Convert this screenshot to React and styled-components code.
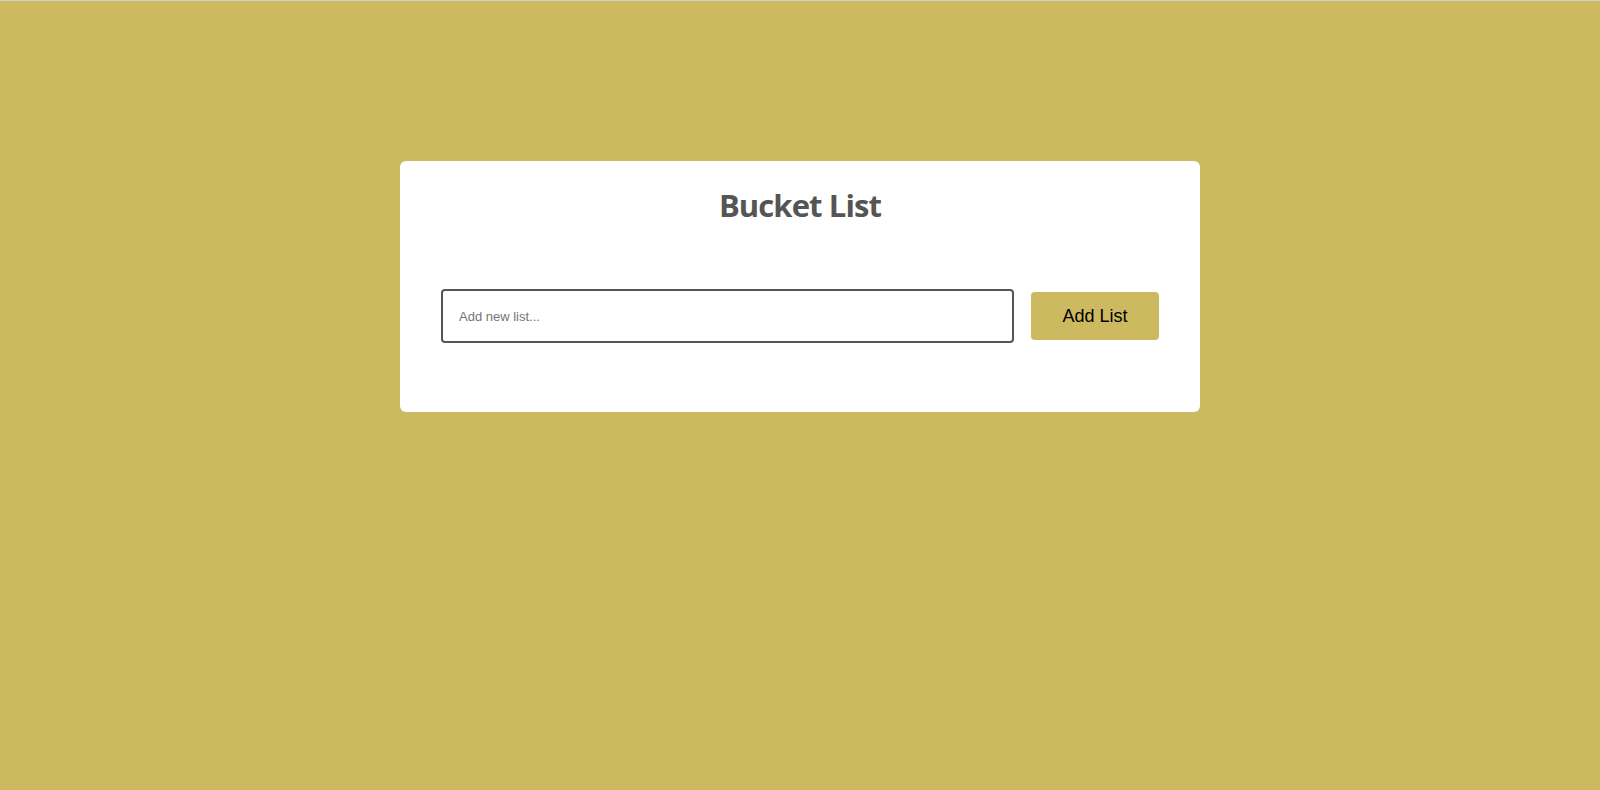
import styled, { createGlobalStyle } from "styled-components";

const GlobalStyle = createGlobalStyle`
  html, body {
    margin: 0;
    padding: 0;
    background: #cdb95f;
  }
  * {
    box-sizing: border-box;
  }
`;

const Page = styled.div`
  min-height: 790px;
  border-top: 1px solid #d2d2d2;
  padding-top: 160px;
  background: #cdb95f;
  font-family: "Liberation Sans", Arial, sans-serif;
`;

const Card = styled.div`
  width: 800px;
  margin: 0 auto;
  background: #ffffff;
  border-radius: 6px;
  padding: 24px 41px 69px;
`;

const Title = styled.h1`
  margin: 0;
  text-align: center;
  font-family: "Open Sans", "Noto Sans", sans-serif;
  font-size: 31px;
  line-height: 40px;
  letter-spacing: -0.9px;
  font-weight: 700;
  color: #555555;
`;

const Row = styled.form`
  display: flex;
  align-items: center;
  gap: 17px;
  margin-top: 64px;
`;

const Input = styled.input`
  flex: 1;
  height: 54px;
  border: 2px solid #555555;
  border-radius: 4px;
  padding: 0 16px;
  font-family: "Liberation Sans", Arial, sans-serif;
  font-size: 13px;
  color: #333;
  outline: none;

  &::placeholder {
    color: #757575;
  }
`;

const Button = styled.button`
  width: 128px;
  height: 48px;
  border: none;
  border-radius: 4px;
  background: #cdb95f;
  color: #000000;
  font-family: "Liberation Sans", Arial, sans-serif;
  font-size: 18px;
  cursor: pointer;
`;

const App = () => {
  return (
    <Page>
      <GlobalStyle />
      <Card>
        <Title>Bucket List</Title>
        <Row onSubmit={(e) => e.preventDefault()}>
          <Input type="text" placeholder="Add new list..." />
          <Button type="submit">Add List</Button>
        </Row>
      </Card>
    </Page>
  );
};

export default App;
